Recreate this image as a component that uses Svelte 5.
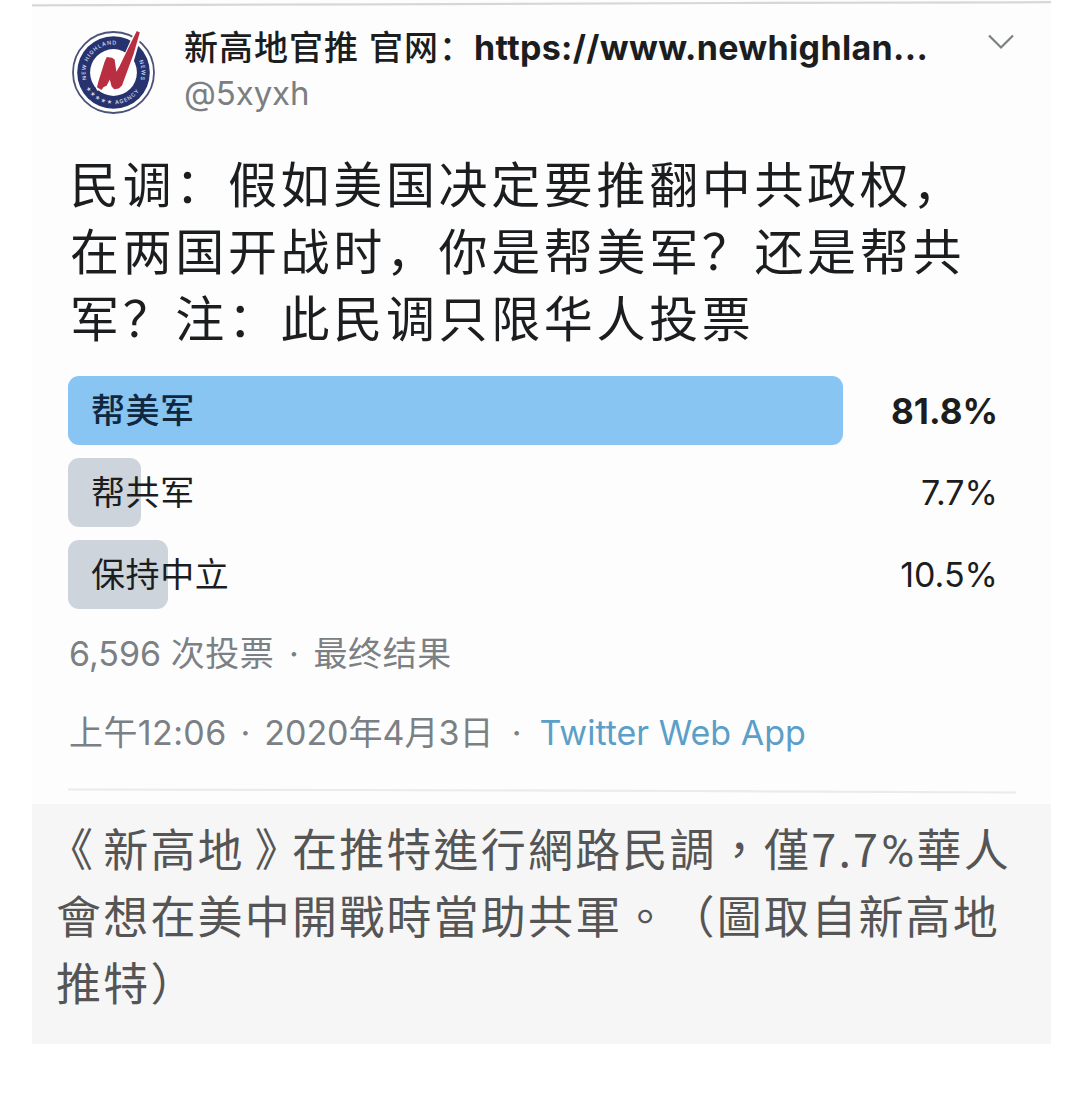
<script>
  const question = [
    '民调：假如美国决定要推翻中共政权，',
    '在两国开战时，你是帮美军？还是帮共',
    '军？注：此民调只限华人投票'
  ];

  const options = [
    { label: '帮美军', share: 81.8, winner: true },
    { label: '帮共军', share: 7.7 },
    { label: '保持中立', share: 10.5 }
  ];
</script>

<figure>
  <article class="tweet" lang="zh-CN">
    <svg class="top-rule" viewBox="0 0 1019 8" aria-hidden="true">
      <path d="M0 5.3 340 4.4 700 3 1019 2.2" fill="none" stroke="#d6d8d8" stroke-width="2.2" />
    </svg>

    <header>
      <svg class="avatar" viewBox="0 0 84 86" aria-hidden="true">
        <defs>
          <path id="ring" d="M14.5 50.7 A28 28 0 0 1 52 17.5" />
          <path id="ring-right" d="M66.9 31.7 A28 28 0 0 1 67.8 53.1" />
          <path id="ring-low" d="M13.7 58.9 A31.8 31.8 0 0 0 70.3 56.9" />
        </defs>
        <circle cx="41.5" cy="43.5" r="40.5" fill="#fff" stroke="#4b5478" stroke-width="1.8" />
        <circle cx="41.5" cy="43.5" r="36.3" fill="#26336f" />
        <circle cx="41.5" cy="43.5" r="23.4" fill="#fff" />
        <g class="ring-text">
          <text><textPath href="#ring">NEW HIGHLAND</textPath></text>
          <text><textPath href="#ring-right">NEWS</textPath></text>
          <text><textPath href="#ring-low">★★★★★ AGENCY</textPath></text>
        </g>
        <path d="M64 3 67.5 2 68 5.5 54 54 46 60 41 57 38 48 33 58 26 60 24 55 31 34 36 27 42 29 46 43z" fill="#fff" stroke="#fff" stroke-width="3" />
        <path d="M67.8 3.4 61.6 25 50 56.6 46.8 59.6 42.2 60.3 39.6 57.4 37.8 50.6 34.6 56.8 31.6 58 29.4 61 25 58.2 26.4 52.6 32.6 32.8 34.8 28 40 28.8 42.6 30.6 44.4 42.8 47.4 37.4 57.8 16 64.8 2z" fill="#b92f42" />
      </svg>
      <div class="author">
        <p class="name">新高地官推 官网：<b>https://www.newhighlan...</b></p>
        <p class="handle">@5xyxh</p>
      </div>
      <svg class="caret" viewBox="0 0 28 18" aria-hidden="true">
        <path d="M2 2.5 14 14.5 26 2.5" fill="none" stroke="#7c8082" stroke-width="2.2" />
      </svg>
    </header>

    <div class="question">
      {#each question as line}
        <p>{line}</p>
      {/each}
    </div>

    <ul class="poll">
      {#each options as option}
        <li class:winner={option.winner}>
          <span class="bar" style:width="{option.share}%"></span>
          <span class="label">{option.label}</span>
          <span class="share">{option.share}%</span>
        </li>
      {/each}
    </ul>

    <p class="votes">6,596 <span>次投票</span><i>·</i><span>最终结果</span></p>
    <p class="stamp"><span>上午12:06</span><i>·</i>2020年4月3日<i class="wide">·</i><a href="#source">Twitter Web App</a></p>

    <svg class="rule" viewBox="0 0 948 6" aria-hidden="true">
      <path d="M0 1.5 280 2 620 3 948 4.5" fill="none" stroke="#e9ebec" stroke-width="2.2" />
    </svg>
  </article>

  <figcaption lang="zh-TW">
    <p><span class="open">《</span>新高地<span class="close">》</span>在推特進行網路民調，僅7.7<span class="percent">%</span>華人</p>
    <p>會想在美中開戰時當助共軍。（圖取自新高地</p>
    <p>推特）</p>
  </figcaption>
</figure>

<style>
  :global(body) { background: #fff; }
  p, ul { margin: 0; padding: 0; }
  p { white-space: nowrap; font-kerning: normal; text-spacing-trim: space-all; }
  i { font-style: normal; }

  figure { width: 1019px; margin: 0 0 0 32px; }
  .tweet { box-sizing: border-box; height: 804px; background: #fdfdfd; color: #1b1d1f; font-family: Inter, "Noto Sans CJK SC", sans-serif; }
  .top-rule { display: block; width: 1019px; height: 8px; }

  header { display: flex; align-items: flex-start; height: 144px; padding: 21px 36px 0 40px; box-sizing: border-box; }
  .avatar { flex: none; width: 84px; height: 86px; }
  .ring-text { fill: #c9cee6; font: 600 5.4px Inter, "DejaVu Sans", sans-serif; letter-spacing: 1px; }
  .author { flex: 1; padding-left: 28px; }
  .name { height: 38px; line-height: 38px; font-size: 34px; font-weight: 500; letter-spacing: 1px; }
  .name b { font-weight: 700; letter-spacing: .33px; }
  .handle { height: 50px; line-height: 52px; color: #7b7f82; font-size: 33px; letter-spacing: -.1px; }
  .caret { flex: none; width: 28px; height: 18px; margin-top: 4px; }

  .question { padding-left: 38px; font-size: 49px; letter-spacing: 3.65px; }
  .question p { height: 67px; line-height: 67px; }

  .poll { display: grid; gap: 13px; margin: 23px 35px 0 36px; list-style: none; }
  .poll li { display: grid; grid-template-columns: 1fr auto; align-items: center; height: 69px; font-size: 34px; }
  .bar { grid-area: 1 / 1 / 2 / 3; height: 69px; border-radius: 11px; background: #ced4dc; }
  .label { grid-area: 1 / 1; padding: 0 0 4px 23px; letter-spacing: .6px; }
  .share { grid-area: 1 / 2; padding-right: 18px; }
  .winner .bar { background: #88c5f2; }
  .winner .label { color: #10283f; font-weight: 500; }
  .winner .share { font-size: 35px; font-weight: 700; }

  .votes, .stamp { padding-left: 37px; color: #7b8084; font-size: 34px; }
  .votes { height: 80px; margin-top: 5px; line-height: 80px; }
  .votes span { letter-spacing: .6px; }
  .stamp { height: 80px; line-height: 78px; }
  .stamp span { letter-spacing: .4px; }
  .votes i, .stamp i { display: inline-block; width: 39px; text-align: center; }
  .stamp i { width: 37.5px; }
  .stamp .wide { width: 46px; }
  .stamp a { color: #5b9fc9; text-decoration: none; }
  .rule { display: block; width: 948px; height: 6px; margin: 14px 0 0 36px; }

  figcaption { box-sizing: border-box; height: 240px; padding: 10px 0 0 24px; background: #f6f6f6; color: #555; font-family: "Noto Sans CJK TC", sans-serif; font-size: 45px; letter-spacing: 2.2px; }
  figcaption p { height: 67px; line-height: 67px; }
  .open, .close { font-feature-settings: "halt"; }
  .open { padding: 0 8px 0 14.5px; }
  .close { padding: 0 12.5px 0 10px; }
  .percent { padding-left: 1px; font-family: Roboto, sans-serif; }
</style>
